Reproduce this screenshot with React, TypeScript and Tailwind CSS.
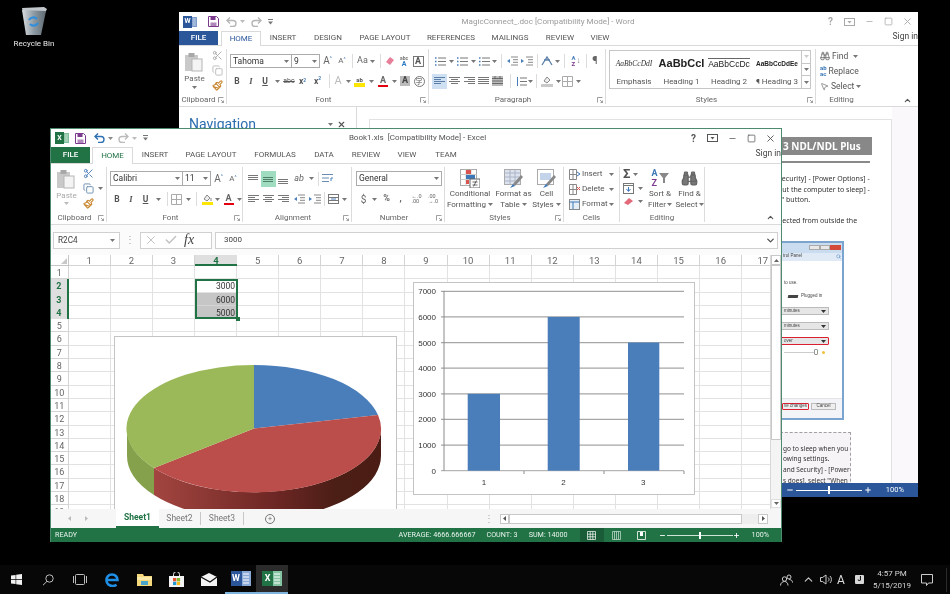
import { Binoculars, Copy, Paintbrush, Scissors, ChevronDown, ChevronUp, Search, MousePointer2, Check, X, Minus, Plus, Square } from 'lucide-react'
import type { ReactNode } from 'react'

const COLUMNS = Array.from({ length: 17 }, (_, i) => i + 1)
const ROWS = Array.from({ length: 19 }, (_, i) => i + 1)
const SELECTED: Record<number, string> = { 2: '3000', 3: '6000', 4: '5000' }

function C({ className = '', children }: { className?: string; children?: ReactNode }) {
  return <span className={`flex shrink-0 items-center justify-center ${className}`}>{children}</span>
}

function Caret({ color = '#777' }: { color?: string }) {
  return (
    <svg width="5" height="3" viewBox="0 0 5 3">
      <path d="M0 0h5L2.5 3z" fill={color} />
    </svg>
  )
}

function Launcher() {
  return (
    <svg width="6" height="6" viewBox="0 0 6 6" className="mr-[2px] shrink-0">
      <path d="M.5 5.5V.5h5M3 3l2.5 2.5M5.5 3.5v2h-2" fill="none" stroke="#888" strokeWidth=".8" />
    </svg>
  )
}

function Lines({ rows, color = '#777', w = 11, h = 10 }: { rows: number[][]; color?: string; w?: number; h?: number }) {
  return (
    <svg width={w} height={h} viewBox={`0 0 ${w} ${h}`}>
      {rows.map((r, i) => (
        <path key={i} d={`M${r[0]} ${r[2]}H${r[1]}`} stroke={color} strokeWidth="1" />
      ))}
    </svg>
  )
}

const ALIGN_LEFT = [[0, 11, 1.5], [0, 7, 3.5], [0, 11, 5.5], [0, 7, 7.5]]
const ALIGN_CENTER = [[0, 11, 1.5], [2, 9, 3.5], [0, 11, 5.5], [2, 9, 7.5]]
const ALIGN_RIGHT = [[0, 11, 1.5], [4, 11, 3.5], [0, 11, 5.5], [4, 11, 7.5]]
const ALIGN_FULL = [[0, 11, 1.5], [0, 11, 3.5], [0, 11, 5.5], [0, 11, 7.5]]

function ListIcon() {
  return (
    <svg width="12" height="11" viewBox="0 0 12 11">
      <path d="M1 2h1.5M1 5.5h1.5M1 9h1.5" stroke="#4a7ebb" strokeWidth="1.4" />
      <path d="M4 2h8M4 5.5h8M4 9h8" stroke="#777" />
    </svg>
  )
}

function IndentIcon({ flip = false, color = '#4a7ebb' }: { flip?: boolean; color?: string }) {
  return (
    <svg width="12" height="10" viewBox="0 0 12 10">
      <path d="M5 1h7M7 3.7h5M7 6.3h5M5 9h7" stroke="#888" />
      <path d={flip ? 'M0 3l3 2-3 2z' : 'M4 3L1 5l3 2z'} fill={color} />
    </svg>
  )
}

function PasteIcon() {
  return (
    <svg width="21" height="20" viewBox="0 0 21 20">
      <rect x="1" y="3" width="13" height="16" fill="#c9c9c9" />
      <rect x="4.5" y="1" width="6" height="4" fill="#a8a8a8" />
      <rect x="8" y="7" width="10" height="12" fill="#f4f4f4" stroke="#b5b5b5" />
    </svg>
  )
}

function OfficeIcon({ letter, dark, light, big = false }: { letter: string; dark: string; light: string; big?: boolean }) {
  return (
    <span className={big ? 'flex h-[15px] w-[20px] items-center' : 'flex h-[12px] w-[14px] items-center'}>
      <span
        className={`z-10 flex items-center justify-center font-bold text-white ${
          big ? 'h-[15px] w-[11px] text-[9px]' : 'h-[12px] w-[9px] text-[7px]'
        }`}
        style={{ backgroundColor: dark }}
      >
        {letter}
      </span>
      <svg width={big ? 9 : 5} height={big ? 15 : 10} viewBox="0 0 9 15" preserveAspectRatio="none">
        <rect width="9" height="15" fill={light} />
        <path d="M1 3h6M1 6h6M1 9h6M1 12h6" stroke="#fff" strokeWidth="1" />
      </svg>
    </span>
  )
}

function SaveIcon({ color }: { color: string }) {
  return (
    <svg width="11" height="11" viewBox="0 0 11 11">
      <path d="M.5.5h8l2 2v8H.5z" fill="#fff" stroke={color} />
      <rect x="2.5" y="1" width="5" height="3" fill={color} />
      <rect x="2.5" y="6.5" width="6" height="4" fill={color} opacity=".6" />
    </svg>
  )
}

function UndoIcon({ color }: { color: string }) {
  return (
    <svg width="11" height="10" viewBox="0 0 11 10">
      <path d="M1.5 3.5h5.5a3 3 0 010 6H4" fill="none" stroke={color} strokeWidth="1.4" />
      <path d="M4 .5L1 3.5l3 3" fill="none" stroke={color} strokeWidth="1.4" />
    </svg>
  )
}

function RedoIcon({ color }: { color: string }) {
  return (
    <svg width="11" height="10" viewBox="0 0 11 10">
      <path d="M9.5 3.5H4a3 3 0 000 6h3" fill="none" stroke={color} strokeWidth="1.4" />
      <path d="M7 .5l3 3-3 3" fill="none" stroke={color} strokeWidth="1.4" />
    </svg>
  )
}

function Customize() {
  return (
    <svg width="5" height="6" viewBox="0 0 5 6">
      <path d="M0 .5h5" stroke="#777" />
      <path d="M0 2.5h5L2.5 5.5z" fill="#777" />
    </svg>
  )
}

function WindowControls({ dim = false }: { dim?: boolean }) {
  const color = dim ? '#a8a8a8' : '#555'
  return (
    <div className="flex items-center">
      <C className="w-[19px]">
        <span className={`text-[10px] font-bold ${dim ? 'text-[#a8a8a8]' : 'text-[#555]'}`}>?</span>
      </C>
      <C className="w-[19px]">
        <svg width="11" height="8" viewBox="0 0 11 8">
          <rect x=".5" y=".5" width="10" height="7" fill="none" stroke={color} />
          <path d="M3.5 3h4L5.5 5.5z" fill={color} />
        </svg>
      </C>
      <C className="w-[20px]">
        <Minus size={9} color={color} />
      </C>
      <C className="w-[19px]">
        <Square size={9} color={color} />
      </C>
      <C className="w-[19px]">
        <X size={11} color={color} />
      </C>
    </div>
  )
}

function Group({ className = '', label, launcher = false, children }: { className?: string; label: string; launcher?: boolean; children: ReactNode }) {
  return (
    <div className={`flex h-[55px] shrink-0 flex-col border-r border-[#dcdcdc] ${className}`}>
      <div className="h-[47px]">{children}</div>
      <div className="flex h-[8px] items-center text-[8px] text-[#666]">
        <span className="flex-1 text-center">{label}</span>
        {launcher && <Launcher />}
      </div>
    </div>
  )
}

function FontBox({ className = '', text }: { className?: string; text: string }) {
  return (
    <span className={`flex h-full items-center justify-between border border-[#ababab] bg-white px-[2px] text-[8.5px] text-[#333] ${className}`}>
      {text}
      <Caret />
    </span>
  )
}

function GrowFont({ small = false }: { small?: boolean }) {
  return (
    <span className="flex items-start text-[#666]">
      <span className={small ? 'text-[8px] leading-none' : 'text-[10px] leading-none'}>A</span>
      <span className="text-[5px] leading-none text-[#4a7ebb]">^</span>
    </span>
  )
}

function ColorA({ color }: { color: string }) {
  return (
    <span className="flex flex-col items-center leading-none">
      <span className="text-[9px] font-bold leading-[9px] text-[#666]">A</span>
      <span className="h-[2px] w-[10px]" style={{ backgroundColor: color }} />
    </span>
  )
}

function FillIcon() {
  return (
    <span className="flex flex-col items-center">
      <svg width="10" height="8" viewBox="0 0 10 8">
        <path d="M2 5l3-4 3 3-3 3z" fill="#eee" stroke="#888" />
        <path d="M9 4v3" stroke="#888" />
      </svg>
      <span className="h-[3px] w-[11px] bg-[#ffe600]" />
    </span>
  )
}

function BorderIcon() {
  return (
    <svg width="11" height="11" viewBox="0 0 11 11">
      <path d="M.5.5h10v10H.5zM5.5.5v10M.5 5.5h10" fill="none" stroke="#aaa" />
    </svg>
  )
}

function PainterIcon() {
  return <Paintbrush size={11} color="#c8852c" strokeWidth={2.4} />
}

function WordWindow() {
  return (
    <div className="absolute left-[179px] top-[12px] flex h-[485px] w-[739px] flex-col bg-white">
      {/* title bar */}
      <div className="flex h-[19px] shrink-0 items-center">
        <div className="flex w-[96px] items-center pl-[4px]">
          <C className="w-[14px]"><OfficeIcon letter="W" dark="#2b579a" light="#7c9ccb" /></C>
          <C className="ml-[10px] w-[13px]"><SaveIcon color="#7c3a8e" /></C>
          <C className="ml-[5px] w-[13px]"><UndoIcon color="#b5b5b5" /></C>
          <C className="w-[8px]"><Caret color="#bbb" /></C>
          <C className="ml-[4px] w-[13px]"><RedoIcon color="#b5b5b5" /></C>
          <C className="ml-[3px] w-[8px]"><Customize /></C>
        </div>
        <div className="flex-1 truncate text-center text-[8.1px] text-[#9a9a9a]">MagicConnect_.doc [Compatibility Mode] - Word</div>
        <div className="pr-[1px]"><WindowControls dim /></div>
      </div>

      {/* tabs */}
      <div className="flex h-[15px] shrink-0 items-stretch border-b border-[#dadada] text-[8px] text-[#555]">
        <span className="flex w-[39px] items-center justify-center bg-[#2b579a] font-medium text-white">FILE</span>
        <span className="-mb-px ml-[3px] flex w-[40px] items-center justify-center border-x border-t border-[#dadada] bg-white text-[#2b579a]">HOME</span>
        <C className="w-[44px]">INSERT</C>
        <C className="w-[46px]">DESIGN</C>
        <C className="w-[68px]">PAGE LAYOUT</C>
        <C className="w-[64px]">REFERENCES</C>
        <C className="w-[54px]">MAILINGS</C>
        <C className="w-[46px]">REVIEW</C>
        <C className="w-[34px]">VIEW</C>
        <span className="ml-auto flex items-center pb-[4px] text-[8.5px] text-[#444]">Sign in</span>
      </div>

      {/* ribbon */}
      <div className="flex h-[61px] shrink-0 border-b border-[#dadada] pt-[3px]">
        <Group className="w-[48px]" label="Clipboard" launcher>
          <div className="flex">
            <div className="flex w-[31px] flex-col items-center pt-[3px] text-[8px] text-[#666]">
              <PasteIcon />
              <span className="mt-[2px] leading-[9px]">Paste</span>
              <span className="mt-[3px]"><Caret /></span>
            </div>
            <div className="flex w-[14px] flex-col items-center gap-[4px] pt-[1px]">
              <Scissors size={11} color="#aaa" />
              <Copy size={11} color="#bbb" />
              <PainterIcon />
            </div>
          </div>
        </Group>

        <Group className="w-[202px]" label="Font" launcher>
          <div className="mt-[5px] flex h-[14px] items-center pl-[3px]">
            <FontBox className="w-[62px]" text="Tahoma" />
            <FontBox className="w-[28px] border-l-0" text="9" />
            <C className="w-[15px]"><GrowFont /></C>
            <C className="w-[14px]"><GrowFont small /></C>
            <C className="w-[6px]"><span className="h-[14px] w-px bg-[#dcdcdc]" /></C>
            <C className="w-[22px] gap-[2px] text-[9px] text-[#666]">Aa<Caret /></C>
            <C className="w-[6px]"><span className="h-[14px] w-px bg-[#dcdcdc]" /></C>
            <C className="w-[14px]">
              <svg width="10" height="10" viewBox="0 0 10 10"><path d="M1 6l4-5 4 3-4 5z" fill="#e77f9a" /></svg>
            </C>
            <C className="w-[14px] flex-col text-[5px] font-bold leading-[5px] text-[#777]">abc<span className="text-[7px] leading-[6px] text-[#2b79c2]">A</span></C>
            <C className="w-[14px]"><span className="flex h-[11px] w-[11px] items-center justify-center border border-[#777] text-[9px] font-bold leading-none text-[#555]">A</span></C>
          </div>
          <div className="mt-[6px] flex h-[14px] items-center pl-[3px] text-[8.5px] text-[#555]">
            <C className="w-[14px] font-bold">B</C>
            <C className="w-[14px] font-['Liberation_Serif'] font-bold italic">I</C>
            <C className="w-[14px] font-bold underline">U</C>
            <C className="w-[11px]"><Caret /></C>
            <C className="w-[12px] text-[7px] line-through">abc</C>
            <C className="w-[15px] font-bold">x<span className="text-[5px] text-[#4a7ebb]">2</span></C>
            <C className="w-[15px] font-bold">x<span className="-mt-[4px] text-[5px] text-[#4a7ebb]">2</span></C>
            <C className="w-[8px]"><span className="h-[14px] w-px bg-[#dcdcdc]" /></C>
            <C className="w-[10px] text-[11px] text-[#bbb]">A</C>
            <C className="w-[10px]"><Caret /></C>
            <C className="w-[13px]">
              <span className="flex flex-col items-center text-[6px] font-bold leading-[7px] text-[#555]">ab<span className="h-[4px] w-[11px] bg-[#ffe600]" /></span>
            </C>
            <C className="w-[10px]"><Caret /></C>
            <C className="w-[14px]"><ColorA color="#e3000f" /></C>
            <C className="w-[8px]"><Caret /></C>
            <C className="w-[14px]"><span className="flex h-[10px] w-[10px] items-center justify-center bg-[#bbb] text-[9px] font-bold text-[#444]">A</span></C>
            <C className="w-[14px]"><span className="flex h-[11px] w-[11px] items-center justify-center rounded-full border border-[#777] font-['Noto_Sans_CJK_JP'] text-[7px]">字</span></C>
          </div>
        </Group>

        <Group className="w-[177px]" label="Paragraph" launcher>
          <div className="mt-[5px] flex h-[14px] items-center pl-[3px]">
            <C className="w-[16px]"><ListIcon /></C>
            <C className="w-[6px]"><Caret /></C>
            <C className="w-[16px]"><ListIcon /></C>
            <C className="w-[6px]"><Caret /></C>
            <C className="w-[16px]"><ListIcon /></C>
            <C className="w-[5px]"><Caret /></C>
            <C className="w-[8px]"><span className="h-[14px] w-px bg-[#dcdcdc]" /></C>
            <C className="w-[14px]"><IndentIcon /></C>
            <C className="w-[15px]"><IndentIcon flip /></C>
            <C className="w-[6px]"><span className="h-[14px] w-px bg-[#dcdcdc]" /></C>
            <C className="w-[14px]">
              <svg width="12" height="10" viewBox="0 0 12 10"><path d="M1 9l5-8 5 8M3 4h6" fill="none" stroke="#5a7fa8" strokeWidth="1.3" /></svg>
            </C>
            <C className="w-[6px]"><Caret /></C>
            <C className="w-[8px]"><span className="h-[14px] w-px bg-[#dcdcdc]" /></C>
            <C className="w-[16px] gap-[1px] text-[6px] font-bold leading-[6px]">
              <span className="flex flex-col text-[#4a7ebb]">A<span className="text-[#7c3a8e]">Z</span></span>
              <span className="text-[8px] text-[#777]">↓</span>
            </C>
            <C className="w-[4px]"><span className="h-[14px] w-px bg-[#dcdcdc]" /></C>
            <C className="w-[14px] text-[11px] text-[#666]">¶</C>
          </div>
          <div className="mt-[6px] flex h-[14px] items-center pl-[3px]">
            <C className="h-[15px] w-[15px] bg-[#cfe0f3]"><Lines rows={ALIGN_LEFT} color="#5a7fa8" /></C>
            <C className="w-[15px]"><Lines rows={ALIGN_CENTER} /></C>
            <C className="w-[14px]"><Lines rows={ALIGN_RIGHT} /></C>
            <C className="w-[14px]"><Lines rows={ALIGN_FULL} /></C>
            <C className="w-[15px]">
              <svg width="11" height="10" viewBox="0 0 11 10"><rect width="11" height="10" fill="#bbb" /><path d="M0 2.5h11M0 5h11M0 7.5h11M3 0v3M8 0v3" stroke="#555" strokeWidth=".8" /></svg>
            </C>
            <C className="w-[10px]"><span className="h-[14px] w-px bg-[#dcdcdc]" /></C>
            <C className="w-[12px]">
              <svg width="11" height="11" viewBox="0 0 11 11"><path d="M4 2h7M4 5.5h7M4 9h7" stroke="#777" /><path d="M1.5 1v9" stroke="#4a7ebb" /></svg>
            </C>
            <C className="w-[6px]"><Caret /></C>
            <C className="w-[6px]"><span className="h-[14px] w-px bg-[#dcdcdc]" /></C>
            <C className="w-[16px]">
              <svg width="12" height="12" viewBox="0 0 12 12"><path d="M3 6l3-4 3 3-3 3z" fill="#eee" stroke="#888" /><rect y="9" width="12" height="3" fill="#c9c9c9" /></svg>
            </C>
            <C className="w-[6px]"><Caret /></C>
            <C className="w-[12px]"><BorderIcon /></C>
            <C className="w-[10px]"><Caret /></C>
          </div>
        </Group>

        <Group className="w-[210px]" label="Styles" launcher>
          <div className="ml-[3px] mt-[1px] flex h-[39px] w-[202px] border border-[#c6c6c6] text-[8px] text-[#555]">
            <div className="flex w-[48px] flex-col items-center">
              <span className="flex h-[26px] items-center font-['Liberation_Serif'] text-[7.5px] italic text-[#333]">AaBbCcDdI</span>
              <span>Emphasis</span>
            </div>
            <div className="flex w-[47px] flex-col items-center">
              <span className="flex h-[26px] items-center font-['Liberation_Sans'] text-[11px] font-bold text-[#222]">AaBbCcI</span>
              <span>Heading 1</span>
            </div>
            <div className="flex w-[48px] flex-col items-center">
              <span className="flex h-[26px] items-center">
                <span className="border-t border-[#666] font-['Liberation_Sans'] text-[8.5px] leading-[11px] text-[#222]">AaBbCcDc</span>
              </span>
              <span>Heading 2</span>
            </div>
            <div className="flex w-[48px] flex-col items-center">
              <span className="flex h-[26px] items-center font-['Liberation_Sans'] text-[6.5px] font-bold text-[#222]">AaBbCcDdEe</span>
              <span>¶ Heading 3</span>
            </div>
            <div className="flex w-[9px] flex-col border-l border-[#c6c6c6]">
              <C className="flex-1 border-b border-[#c6c6c6]"><Caret color="#ccc" /></C>
              <C className="flex-1 border-b border-[#c6c6c6]"><Caret /></C>
              <C className="flex-1"><Caret /></C>
            </div>
          </div>
        </Group>

        <Group className="w-[51px] border-r-0" label="Editing">
          <div className="flex flex-col gap-[3px] pl-[4px] pt-[1px] text-[8.5px] leading-[12px] text-[#555]">
            <span className="flex items-center gap-[2px]"><Binoculars size={10} color="#666" />Find<span className="ml-[3px]"><Caret /></span></span>
            <span className="flex items-center gap-[2px]">
              <span className="text-[6px] font-bold leading-[6px] text-[#3c78b8]">ab<br />ac</span>Replace
            </span>
            <span className="flex items-center gap-[2px]"><MousePointer2 size={9} color="#777" />Select<Caret /></span>
          </div>
        </Group>

        <div className="flex flex-1 items-end justify-end pb-[1px] pr-[6px]">
          <ChevronUp size={9} color="#555" strokeWidth={3} />
        </div>
      </div>

      {/* document */}
      <div className="flex min-h-0 flex-1">
        <div className="h-full w-[178px] shrink-0 border-r border-[#dadada] px-[10px] pt-[8px]">
          <div className="flex items-center justify-between text-[14px] leading-[18px] text-[#2b6cb0]">
            <span>Navigation</span>
            <span className="flex items-center gap-[4px]"><Caret /><X size={9} color="#555" strokeWidth={3} /></span>
          </div>
        </div>
        <div className="h-full w-[535px] bg-white pl-[12px] pt-[12px]">
          <div className="h-full border border-b-0 border-[#e2e2e2] pl-[410px] pt-[17px]">
            <div className="flex h-[18px] w-[92px] items-center bg-[#888] pl-[3px] font-['Noto_Sans'] text-[10px] font-bold text-white">3 NDL/NDL Plus</div>
            <div className="mt-[6px] h-[2px] w-[90px] bg-[#8a8a8a]" />
            <div className="ml-[-2px] mt-[11px] flex flex-col whitespace-nowrap font-['Noto_Sans'] text-[7px] leading-[10.5px] text-[#333]">
              <span>Security] - [Power Options] -</span>
              <span>Put the computer to sleep] -</span>
              <span>s" button.</span>
              <span className="mt-[10.5px]">nected from outside the</span>
            </div>
            {/* pasted dialog picture */}
            <div className="mt-[14px] flex h-[179px] w-[64px] flex-col border-2 border-[#7ba4cf] bg-white font-['Liberation_Sans'] text-[4.5px] text-[#444]">
              <div className="flex h-[10px] items-center justify-end bg-[#c9dcf0] pr-[1px]">
                <span className="h-[5px] w-[11px] border border-[#aaa] bg-[#e8e8e8]" />
                <span className="h-[5px] w-[10px] border border-[#aaa] bg-[#e8e8e8]" />
                <span className="h-[5px] w-[11px] bg-[#d24a3a]" />
              </div>
              <div className="flex h-[8px] items-center justify-between bg-[#dfeaf6] px-[1px]">
                <span>trol Panel</span>
                <Search size={5} color="#3c78b8" />
              </div>
              <div className="mt-[19px] pl-[2px]">to use.</div>
              <div className="mt-[7px] flex items-center gap-[3px] pl-[6px]">
                <span className="h-[3px] w-[10px] -skew-x-12 bg-[#444]" />Plugged in
              </div>
              <div className="ml-[-1px] mt-[7px] flex h-[8px] w-[48px] items-center justify-between border border-[#bbb] bg-[#e6e6e6] px-[2px]">minutes<Caret color="#333" /></div>
              <div className="ml-[-1px] mt-[7px] flex h-[8px] w-[48px] items-center justify-between border border-[#bbb] bg-[#e6e6e6] px-[2px]">minutes<Caret color="#333" /></div>
              <div className="ml-[-1px] mt-[7px] flex h-[8px] w-[48px] items-center justify-between rounded-[1px] border border-[#d92030] bg-[#e6e6e6] px-[2px]">over<Caret color="#333" /></div>
              <div className="mt-[4px] flex items-center pl-[2px]">
                <span className="h-px w-[30px] bg-[#ccc]" />
                <span className="h-[6px] w-[4px] rounded-[1px] border border-[#999] bg-white" />
                <span className="ml-[4px] h-[3px] w-[3px] rounded-full bg-[#f0c040]" />
              </div>
              <div className="mt-auto flex h-[20px] items-center gap-[2px] border-t border-[#e4e4e4] bg-[#f2f4f7] pb-[4px]">
                <span className="flex h-[7px] w-[27px] items-center rounded-[1px] border border-[#d92030] bg-[#eee] pl-[1px]">ve changes</span>
                <span className="flex h-[7px] w-[25px] items-center justify-center border border-[#bbb] bg-[#eee]">Cancel</span>
              </div>
            </div>
            {/* dashed note */}
            <div className="mt-[12px] h-[60px] w-[71px] overflow-hidden border border-dashed border-[#a0a0a0] bg-[#f7f4f7] pl-[2px] pt-[11px] font-['Noto_Sans'] text-[6.5px] leading-[10.7px] text-[#333]">
              <div className="whitespace-nowrap">go to sleep when you</div>
              <div className="whitespace-nowrap">owing settings.</div>
              <div className="whitespace-nowrap">and Security] - [Power</div>
              <div className="whitespace-nowrap">s does], select "When</div>
            </div>
          </div>
        </div>
        <div className="h-full flex-1 bg-[#fbf8fb]" />
      </div>

      {/* status bar */}
      <div className="flex h-[14px] shrink-0 items-center justify-end bg-[#2b579a] pr-[14px] text-[7.5px] text-white">
        <Minus size={8} color="#fff" strokeWidth={3} />
        <span className="mx-[2px] flex h-px w-[66px] items-center justify-center bg-white">
          <span className="h-[8px] w-[2px] bg-white" />
        </span>
        <Plus size={8} color="#fff" strokeWidth={3} />
        <span className="ml-[14px]">100%</span>
      </div>
    </div>
  )
}

function BarChart() {
  const bars = [
    { x: 54.7, w: 32.3, v: 3000 },
    { x: 134.7, w: 32, v: 6000 },
    { x: 215, w: 31.3, v: 5000 },
  ]
  const y = (v: number) => 188.7 - (v / 7000) * 179.4
  return (
    <svg width="282" height="213" viewBox="1 1 280 211" className="absolute left-[362px] top-[27px] border border-[#c4c4c4] bg-white">
      {[0, 1000, 2000, 3000, 4000, 5000, 6000, 7000].map((v) => (
        <g key={v}>
          <path d={`M28 ${y(v)}H271`} stroke="#a6a6a6" strokeWidth={v === 0 ? 1 : 1.2} />
          <text x="23" y={y(v) + 3} textAnchor="end" fontSize="8" fill="#333" fontFamily="Liberation Sans">{v}</text>
        </g>
      ))}
      <path d="M31 9v180M111 189v3M191 189v3M271 189v3" stroke="#8a8a8a" fill="none" />
      {bars.map((b) => (
        <rect key={b.x} x={b.x} y={y(b.v)} width={b.w} height={188.7 - y(b.v)} fill="#4a7ebb" />
      ))}
      {[1, 2, 3].map((n, i) => (
        <text key={n} x={71 + i * 79.6} y="203" textAnchor="middle" fontSize="8" fill="#333" fontFamily="Liberation Sans">{n}</text>
      ))}
    </svg>
  )
}

function PieChart() {
  return (
    <svg width="283" height="202" viewBox="1 1 281 200" className="absolute left-[63px] top-[81px] border border-[#c4c4c4] bg-white">
      <defs>
        <linearGradient id="redSide" x1="0" x2="1" y1="0" y2="0">
          <stop offset="0" stopColor="#a34540" />
          <stop offset=".55" stopColor="#6b2623" />
          <stop offset=".8" stopColor="#4b1e16" />
          <stop offset="1" stopColor="#4a1c14" />
        </linearGradient>
      </defs>
      <path d="M13 92.5A127 63.5 0 0 0 40 132V159A127 63.5 0 0 1 13 119.5Z" fill="#86a14c" />
      <path d="M40 132A127 63.5 0 0 0 267 92.5V119.5A127 63.5 0 0 1 40 159Z" fill="url(#redSide)" />
      <path d="M140 92.5V29A127 63.5 0 0 1 264 79Z" fill="#4a7ebb" />
      <path d="M140 92.5L264 79A127 63.5 0 0 1 40 132Z" fill="#bb4d4a" />
      <path d="M140 92.5L40 132A127 63.5 0 0 1 140 29Z" fill="#9bb958" />
    </svg>
  )
}

function Sheet() {
  return (
    <div className="relative min-w-0 flex-1 overflow-hidden bg-white">
      <div className="flex h-[11px] text-[9.5px] leading-[11px] text-[#666]">
        <div className="flex w-[17.7px] shrink-0 items-end justify-end border-b border-r border-[#c6c6c6] pb-[1px] pr-[1px]">
          <svg width="6" height="6" viewBox="0 0 6 6"><path d="M6 0v6H0z" fill="#c8c8c8" /></svg>
        </div>
        {COLUMNS.map((col) => (
          <div
            key={col}
            className={
              col === 4
                ? 'w-[42.1px] shrink-0 border-b-2 border-[#217346] bg-[#dfdfdf] text-center font-bold text-[#217346]'
                : 'w-[42.1px] shrink-0 border-b border-r border-[#d4d4d4] text-center'
            }
          >
            {col}
          </div>
        ))}
      </div>
      {ROWS.map((row) => (
        <div key={row} className="flex h-[13.3px] text-[9px] leading-[14px] text-[#666]">
          <div
            className={
              SELECTED[row]
                ? 'w-[17.7px] shrink-0 border-r-2 border-[#217346] bg-[#dfdfdf] text-center font-bold text-[#217346]'
                : 'w-[17.7px] shrink-0 border-b border-r border-[#d4d4d4] text-center'
            }
          >
            {row}
          </div>
          {COLUMNS.map((col) => (
            <div
              key={col}
              className={
                col === 4 && row > 2 && row < 5
                  ? 'w-[42.1px] shrink-0 border-b border-r border-[#d4d4d4] bg-[#c6c6c6] pr-[1px] text-right text-[8.5px] text-[#333]'
                  : 'w-[42.1px] shrink-0 border-b border-r border-[#e2e2e2] pr-[1px] text-right text-[8.5px] text-[#333]'
              }
            >
              {col === 4 ? SELECTED[row] : ''}
            </div>
          ))}
        </div>
      ))}
      {/* selection frame */}
      <div className="absolute left-[144px] top-[24px] h-[40px] w-[43px] border-2 border-[#217346]" />
      <div className="absolute left-[185px] top-[62px] h-[4px] w-[4px] bg-[#217346]" />
      <PieChart />
      <BarChart />
    </div>
  )
}

function ExcelWindow() {
  return (
    <div className="absolute left-[50px] top-[128px] flex h-[414px] w-[732px] flex-col border-x border-t border-[#4d8b6e] bg-white">
      {/* title bar */}
      <div className="flex h-[18px] shrink-0 items-center">
        <div className="flex w-[100px] items-center pl-[4px]">
          <C className="w-[14px]"><OfficeIcon letter="X" dark="#217346" light="#7fbf9c" /></C>
          <C className="ml-[5px] w-[13px]"><SaveIcon color="#7c3a8e" /></C>
          <C className="ml-[6px] w-[13px]"><UndoIcon color="#2c6fb3" /></C>
          <C className="w-[8px]"><Caret color="#888" /></C>
          <C className="ml-[3px] w-[13px]"><RedoIcon color="#bbb" /></C>
          <C className="w-[8px]"><Caret color="#bbb" /></C>
          <C className="ml-[3px] w-[8px]"><Customize /></C>
        </div>
        <div className="flex-1 truncate text-center text-[8px] text-[#555]">Book1.xls&nbsp; [Compatibility Mode] - Excel</div>
        <div className="pr-[1px]"><WindowControls /></div>
      </div>

      {/* tabs */}
      <div className="flex h-[17px] shrink-0 items-stretch border-b border-[#dadada] text-[8px] text-[#555]">
        <span className="flex w-[39px] items-center justify-center bg-[#217346] font-medium text-white">FILE</span>
        <span className="-mb-px ml-[2px] flex w-[41px] items-center justify-center border-x border-t border-[#dadada] bg-white text-[#217346]">HOME</span>
        <C className="w-[44px]">INSERT</C>
        <C className="w-[68px]">PAGE LAYOUT</C>
        <C className="w-[60px]">FORMULAS</C>
        <C className="w-[38px]">DATA</C>
        <C className="w-[46px]">REVIEW</C>
        <C className="w-[36px]">VIEW</C>
        <C className="w-[42px]">TEAM</C>
        <span className="ml-auto flex items-center pb-[4px] text-[8.5px] text-[#444]">Sign in</span>
      </div>

      {/* ribbon */}
      <div className="flex h-[61px] shrink-0 border-b border-[#dadada] pt-[3px]">
        <Group className="w-[56px]" label="Clipboard" launcher>
          <div className="flex">
            <div className="flex w-[31px] flex-col items-center pt-[2px] text-[8px] text-[#aaa]">
              <PasteIcon />
              <span className="mt-[2px] leading-[9px]">Paste</span>
              <span className="mt-[2px]"><Caret color="#bbb" /></span>
            </div>
            <div className="flex w-[22px] flex-col items-start gap-[4px] pl-[1px] pt-[1px]">
              <Scissors size={11} color="#4a7ebb" />
              <span className="flex items-center gap-[4px]"><Copy size={11} color="#6a8cb0" /><Caret /></span>
              <PainterIcon />
            </div>
          </div>
        </Group>

        <Group className="w-[136px]" label="Font" launcher>
          <div className="mt-[4px] flex h-[15px] items-center pl-[3px]">
            <FontBox className="w-[73px]" text="Calibri" />
            <FontBox className="w-[28px] border-l-0" text="11" />
            <C className="w-[15px]"><GrowFont /></C>
            <C className="w-[14px]"><GrowFont small /></C>
          </div>
          <div className="mt-[6px] flex h-[14px] items-center pl-[3px] text-[8.5px] text-[#555]">
            <C className="w-[14px] font-bold">B</C>
            <C className="w-[14px] font-['Liberation_Serif'] font-bold italic">I</C>
            <C className="w-[15px] font-bold underline">U</C>
            <C className="w-[11px]"><Caret /></C>
            <C className="w-[6px]"><span className="h-[14px] w-px bg-[#dcdcdc]" /></C>
            <C className="w-[13px]"><BorderIcon /></C>
            <C className="w-[10px]"><Caret /></C>
            <C className="w-[7px]"><span className="h-[14px] w-px bg-[#dcdcdc]" /></C>
            <C className="w-[14px]"><FillIcon /></C>
            <C className="w-[7px]"><Caret /></C>
            <C className="w-[15px]"><ColorA color="#e3000f" /></C>
            <C className="w-[7px]"><Caret /></C>
          </div>
        </Group>

        <Group className="w-[109px]" label="Alignment" launcher>
          <div className="mt-[4px] flex h-[15px] items-center pl-[3px]">
            <C className="w-[15px]"><Lines rows={[[0, 10, 1.5], [0, 10, 3.5], [0, 10, 5.5]]} /></C>
            <C className="h-[16px] w-[15px] bg-[#a0dcc0]"><Lines rows={[[0, 10, 3.5], [0, 10, 5.5], [0, 10, 7.5]]} color="#4f7f68" /></C>
            <C className="w-[15px]"><Lines rows={[[0, 10, 5.5], [0, 10, 7.5], [0, 10, 9.5]]} /></C>
            <C className="w-[16px] text-[9px] italic text-[#666]">ab</C>
            <C className="w-[8px]"><Caret /></C>
            <C className="w-[6px]"><span className="h-[14px] w-px bg-[#dcdcdc]" /></C>
            <C className="w-[14px]">
              <svg width="12" height="11" viewBox="0 0 12 11"><path d="M0 1.5h11M0 5h7M0 8.5h7" stroke="#6a8cb0" strokeWidth="1.2" /><path d="M9 8V5h2" fill="none" stroke="#4a7ebb" /></svg>
            </C>
          </div>
          <div className="mt-[6px] flex h-[14px] items-center pl-[3px]">
            <C className="w-[15px]"><Lines rows={ALIGN_LEFT} /></C>
            <C className="w-[15px]"><Lines rows={ALIGN_CENTER} /></C>
            <C className="w-[15px]"><Lines rows={ALIGN_RIGHT} /></C>
            <C className="w-[16px]"><IndentIcon /></C>
            <C className="w-[15px]"><IndentIcon flip /></C>
            <C className="w-[4px]"><span className="h-[14px] w-px bg-[#dcdcdc]" /></C>
            <C className="w-[14px]">
              <svg width="11" height="10" viewBox="0 0 11 10"><rect x=".5" y=".5" width="10" height="9" fill="none" stroke="#777" /><path d="M.5 3.5h10M.5 6.5h10" stroke="#777" /><path d="M3 5h5" stroke="#4a7ebb" /></svg>
            </C>
            <C className="w-[8px]"><Caret /></C>
          </div>
        </Group>

        <Group className="w-[93px]" label="Number" launcher>
          <div className="mt-[4px] flex h-[15px] items-center pl-[4px]">
            <FontBox className="w-[86px]" text="General" />
          </div>
          <div className="mt-[6px] flex h-[14px] items-center pl-[4px] text-[9px] text-[#666]">
            <C className="w-[15px] text-[10px]">$</C>
            <C className="w-[7px]"><Caret /></C>
            <C className="w-[17px] font-bold">%</C>
            <C className="w-[11px] font-bold">,</C>
            <C className="ml-[2px] w-[17px] text-[5.5px] leading-[5px]">←.0<br />.00</C>
            <C className="w-[16px] text-[5.5px] leading-[5px]">.00<br />→.0</C>
          </div>
        </Group>

        <Group className="w-[119px]" label="Styles" launcher>
          <div className="flex text-[8px] leading-[10.5px] text-[#555]">
            <div className="flex w-[50px] flex-col items-center pt-[2px] text-center">
              <svg width="20" height="19" viewBox="0 0 20 19">
                <rect x=".5" y=".5" width="16" height="16" fill="#fff" stroke="#aaa" />
                <path d="M6 .5v16M11 .5v16M.5 5.5h16M.5 10.5h16" stroke="#ccc" />
                <rect x="6" y="1" width="5" height="4" fill="#d9534f" />
                <rect x="6" y="6" width="9" height="4" fill="#3c78b8" />
                <rect x="6" y="11" width="3" height="4" fill="#d9534f" />
                <rect x="10" y="10" width="10" height="9" fill="#fff" stroke="#666" />
                <path d="M12.5 13h5M12.5 16h5M16.5 11.5l-3 6" stroke="#444" strokeWidth=".8" />
              </svg>
              <span className="mt-[1px] whitespace-nowrap">Conditional</span>
              <span className="flex items-center gap-[2px] whitespace-nowrap">Formatting<Caret /></span>
            </div>
            <div className="flex w-[37px] flex-col items-center pt-[2px] text-center">
              <svg width="20" height="19" viewBox="0 0 20 19">
                <rect x=".5" y=".5" width="16" height="15" fill="#dde3ee" stroke="#aaa" />
                <path d="M.5 4h16M.5 8h16M.5 12h16M6 .5v15M11 .5v15" stroke="#aab4c6" />
                <path d="M9 15l8-9 2 2-8 9z" fill="#888" />
                <path d="M6 19l3-4 2 2z" fill="#3c78b8" />
              </svg>
              <span className="mt-[1px] whitespace-nowrap">Format as</span>
              <span className="flex items-center gap-[2px]">Table<Caret /></span>
            </div>
            <div className="flex w-[29px] flex-col items-center pt-[2px] text-center">
              <svg width="20" height="19" viewBox="0 0 20 19">
                <rect x=".5" y=".5" width="16" height="15" fill="#fff" stroke="#aaa" />
                <rect x="3" y="4" width="11" height="7" fill="#c3d4ea" />
                <path d="M9 15l8-9 2 2-8 9z" fill="#888" />
                <path d="M6 19l3-4 2 2z" fill="#3c78b8" />
              </svg>
              <span className="mt-[1px]">Cell</span>
              <span className="flex items-center gap-[2px]">Styles<Caret /></span>
            </div>
          </div>
        </Group>

        <Group className="w-[56px]" label="Cells">
          <div className="flex flex-col gap-[3px] pl-[5px] pt-[1px] text-[8px] leading-[12px] text-[#555]">
            <span className="flex items-center gap-[1px]">
              <svg width="12" height="11" viewBox="0 0 12 11"><path d="M.5.5h7v10h-7zM.5 5.5h7M4 .5v10" fill="#fff" stroke="#888" /><path d="M8 3l3 2-3 2" fill="none" stroke="#3c78b8" /></svg>
              Insert<span className="ml-[5px]"><Caret /></span>
            </span>
            <span className="flex items-center gap-[1px]">
              <svg width="12" height="11" viewBox="0 0 12 11"><path d="M.5.5h7v10h-7zM.5 5.5h7M4 .5v10" fill="#fff" stroke="#888" /><path d="M8 3l3 3M11 3L8 6" stroke="#d9534f" /></svg>
              Delete<span className="ml-[3px]"><Caret /></span>
            </span>
            <span className="flex items-center gap-[1px]">
              <svg width="12" height="11" viewBox="0 0 12 11"><rect x=".5" y=".5" width="10" height="10" fill="#e4ecf6" stroke="#888" /><path d="M.5 3h10M4 3v7" stroke="#3c78b8" /></svg>
              Format<Caret />
            </span>
          </div>
        </Group>

        <Group className="w-[85px]" label="Editing">
          <div className="flex">
            <div className="flex w-[24px] flex-col gap-[3px] pl-[3px] pt-[1px] leading-[12px]">
              <span className="flex items-center gap-[3px] text-[13px] font-bold text-[#555]">Σ<Caret /></span>
              <span className="flex items-center gap-[4px]">
                <svg width="11" height="11" viewBox="0 0 11 11"><rect x=".5" y=".5" width="10" height="10" fill="#fff" stroke="#777" /><path d="M.5 2.5h10" stroke="#777" /><path d="M5.5 4v4M3.5 6l2 2.5 2-2.5" fill="none" stroke="#3c78b8" /></svg>
                <Caret />
              </span>
              <span className="flex items-center gap-[4px]">
                <svg width="11" height="9" viewBox="0 0 11 9"><path d="M1 6l5-5 4 3-5 4z" fill="#e26a7a" /></svg>
                <Caret />
              </span>
            </div>
            <div className="flex w-[32px] flex-col items-center pt-[1px] text-[8px] leading-[10.5px] text-[#555]">
              <span className="flex h-[20px] items-center gap-[1px]">
                <span className="flex flex-col text-[9px] font-bold leading-[10px]"><span className="text-[#3c78b8]">A</span><span className="text-[#7c3a8e]">Z</span></span>
                <svg width="10" height="10" viewBox="0 0 10 10"><path d="M0 0h10L6 5v5H4V5z" fill="#888" /></svg>
              </span>
              <span className="mt-[1px] whitespace-nowrap">Sort &amp;</span>
              <span className="flex items-center gap-[1px] whitespace-nowrap">Filter<Caret /></span>
            </div>
            <div className="flex w-[27px] flex-col items-center pt-[1px] text-[8px] leading-[10.5px] text-[#555]">
              <span className="flex h-[20px] items-center"><Binoculars size={17} color="#666" fill="#777" /></span>
              <span className="mt-[1px] whitespace-nowrap">Find &amp;</span>
              <span className="flex items-center gap-[1px] whitespace-nowrap">Select<Caret /></span>
            </div>
          </div>
        </Group>

        <div className="flex flex-1 items-end justify-end pb-[2px] pr-[6px]">
          <ChevronUp size={9} color="#555" strokeWidth={3} />
        </div>
      </div>

      {/* formula bar */}
      <div className="flex h-[30px] shrink-0 items-center bg-[#fbfbfb] pl-[2px] pr-[3px]">
        <div className="flex h-[17px] w-[67px] items-center justify-between border border-[#d0d0d0] bg-white px-[4px] text-[8.2px] text-[#444]">
          R2C4<Caret />
        </div>
        <C className="w-[20px] text-[10px] leading-none text-[#aaa]">⋮</C>
        <div className="flex h-[17px] w-[72px] items-center gap-[6px] border border-[#d0d0d0] bg-white pl-[3px]">
          <X size={14} color="#c0c0c0" strokeWidth={1.6} />
          <Check size={14} color="#c0c0c0" strokeWidth={2.4} />
          <span className="font-['Liberation_Serif'] text-[14px] italic leading-none text-[#444]">fx</span>
        </div>
        <div className="ml-[3px] flex h-[17px] flex-1 items-center justify-between border border-[#d0d0d0] bg-white pl-[8px] pr-[1px] text-[8px] text-[#444]">
          3000
          <ChevronDown size={11} color="#555" strokeWidth={3} />
        </div>
      </div>

      {/* sheet and vertical scrollbar */}
      <div className="flex min-h-0 flex-1">
        <Sheet />
        <div className="flex w-[11px] shrink-0 flex-col border-l border-[#d8d8d8] bg-[#f4f4f4]">
          <C className="h-[10px] border border-[#c8c8c8] bg-white"><svg width="5" height="3" viewBox="0 0 5 3"><path d="M0 3h5L2.5 0z" fill="#666" /></svg></C>
          <div className="h-[175px] border border-[#c8c8c8] bg-white" />
          <C className="mb-[1px] mt-auto h-[9px] border border-[#e0e0e0] bg-white"><Caret color="#666" /></C>
        </div>
      </div>

      {/* sheet tabs */}
      <div className="flex h-[19px] shrink-0 items-center bg-[#f6f6f6] text-[8.5px] text-[#777]">
        <span className="ml-[17px] flex w-[20px] justify-between">
          <svg width="3" height="5" viewBox="0 0 3 5"><path d="M3 0v5L0 2.500z" fill="#bbb" /></svg>
          <svg width="3" height="5" viewBox="0 0 3 5"><path d="M0 0v5l3-2.500z" fill="#bbb" /></svg>
        </span>
        <span className="ml-[28px] flex h-full w-[43px] items-center justify-center border-b-2 border-[#217346] bg-white font-bold text-[#217346]">Sheet1</span>
        <span className="flex h-[13px] w-[42px] items-center justify-center border-r border-[#c8c8c8]">Sheet2</span>
        <span className="flex h-[13px] w-[43px] items-center justify-center border-r border-[#c8c8c8]">Sheet3</span>
        <C className="ml-[21px] h-[10px] w-[10px] rounded-full border border-[#777] text-[8px] leading-none">+</C>
        <span className="ml-[209px] text-[10px] leading-none text-[#aaa]">⋮</span>
        <C className="ml-[6px] h-[10px] w-[9px] border border-[#c8c8c8] bg-white">
          <svg width="3" height="5" viewBox="0 0 3 5"><path d="M3 0v5L0 2.500z" fill="#555" /></svg>
        </C>
        <span className="h-[10px] w-[233px] border border-[#c8c8c8] bg-white" />
        <span className="h-[10px] w-[16px] bg-[#eeeeee]" />
        <C className="h-[10px] w-[10px] border border-[#c8c8c8] bg-white">
          <svg width="3" height="5" viewBox="0 0 3 5"><path d="M0 0v5l3-2.500z" fill="#555" /></svg>
        </C>
      </div>

      {/* status bar */}
      <div className="flex h-[14px] shrink-0 items-center bg-[#217346] text-[7.2px] text-[#e8f3ed]">
        <span className="ml-[4px]">READY</span>
        <span className="ml-auto">AVERAGE: 4666.666667</span>
        <span className="ml-[11px]">COUNT: 3</span>
        <span className="ml-[11px]">SUM: 14000</span>
        <C className="ml-[12px] h-full w-[24px] bg-[#1a5c38]">
          <svg width="9" height="9" viewBox="0 0 9 9"><path d="M.5.5h8v8h-8zM3.2.5v8M5.8.5v8M.5 3.2h8M.5 5.8h8" fill="none" stroke="#fff" strokeWidth=".7" /></svg>
        </C>
        <C className="w-[26px]">
          <svg width="9" height="9" viewBox="0 0 9 9"><path d="M.5.5h8v8h-8zM2.500.5v8M6.500.5v8M4.500.5v8" fill="none" stroke="#cfe3d8" strokeWidth=".7" /></svg>
        </C>
        <C className="w-[24px]">
          <svg width="9" height="9" viewBox="0 0 9 9"><path d="M.5.5h8v8h-8z" fill="none" stroke="#fff" strokeWidth=".8" /><rect x="3" y="1" width="3" height="4" fill="#fff" /></svg>
        </C>
        <C className="ml-[5px] w-[8px]"><Minus size={7} color="#fff" strokeWidth={3} /></C>
        <span className="flex h-px w-[66px] items-center justify-center bg-[#cfe3d8]"><span className="h-[7px] w-[2px] bg-white" /></span>
        <C className="w-[8px]"><Plus size={7} color="#fff" strokeWidth={3} /></C>
        <span className="ml-[11px] mr-[12px]">100%</span>
      </div>
    </div>
  )
}

function RecycleBin() {
  return (
    <div className="absolute left-[8px] top-[6px] flex w-[52px] flex-col items-center">
      <svg width="28" height="30" viewBox="0 0 28 30">
        <defs>
          <linearGradient id="binBody" x1="0" x2="1" y1="0" y2="0">
            <stop offset="0" stopColor="#d9dde0" />
            <stop offset=".5" stopColor="#8d9aa3" />
            <stop offset="1" stopColor="#5f6a72" />
          </linearGradient>
        </defs>
        <path d="M2 2l22-1 3 2-2 4H3z" fill="#c2c7cb" />
        <path d="M2 4l4 25h15l5-24z" fill="url(#binBody)" />
        <path d="M9 14a5 5 0 018-1M18 17a5 5 0 01-8 1" fill="none" stroke="#2f8fdd" strokeWidth="2.2" />
      </svg>
      <span className="mt-[2px] text-[8px] leading-[11px] text-[#e8e8e8]">Recycle Bin</span>
    </div>
  )
}

function Taskbar() {
  return (
    <div className="flex h-[29px] shrink-0 items-center bg-[#070707] text-[#d6d6d6]">
      <C className="ml-[1px] h-full w-[31px]">
        <svg width="11" height="11" viewBox="0 0 11 11"><path d="M0 1.600L4.600.9v4.200H0zM5.200.8L11 0v5.100H5.200zM0 5.800h4.600V10L0 9.400zM5.200 5.800H11V11l-5.800-.8z" fill="#f2f2f2" /></svg>
      </C>
      <C className="h-full w-[32px]">
        <svg width="12" height="12" viewBox="0 0 12 12"><circle cx="7.500" cy="4.500" r="3.700" fill="none" stroke="#bdbdbd" /><path d="M5 7.300L1 11.200" stroke="#bdbdbd" /></svg>
      </C>
      <C className="h-full w-[32px]">
        <svg width="14" height="11" viewBox="0 0 14 11"><rect x="2.500" y=".5" width="9" height="10" rx="1" fill="none" stroke="#bdbdbd" /><path d="M.5 2v7M13.500 2v7" stroke="#bdbdbd" /></svg>
      </C>
      <C className="h-full w-[32px]">
        <svg width="14" height="14" viewBox="0 0 14 14"><path d="M2 7h10.500C12.500 3.500 10 1.500 7 1.500 3.500 1.500 1.500 4 1.500 7.500c0 3.500 3 5.500 6 5.500 1.500 0 3-.5 4-1.200" fill="none" stroke="#1f8fe6" strokeWidth="2.600" /></svg>
      </C>
      <C className="h-full w-[32px]">
        <svg width="15" height="13" viewBox="0 0 15 13"><path d="M0 1h6l1 2h8v10H0z" fill="#f5d77c" /><rect y="4" width="15" height="3" fill="#fbe9a8" /><rect x="4" y="8" width="7" height="4" fill="#4aa3c8" /></svg>
      </C>
      <C className="h-full w-[32px]">
        <svg width="15" height="15" viewBox="0 0 15 15">
          <path d="M4.500 4V2.500a3 3 0 016 0V4" fill="none" stroke="#eee" />
          <rect y="4" width="15" height="11" fill="#f4f4f4" />
          <rect x="4" y="6" width="3.300" height="3.300" fill="#e8532f" />
          <rect x="7.800" y="6" width="3.300" height="3.300" fill="#7fb92f" />
          <rect x="4" y="9.800" width="3.300" height="3.300" fill="#1f9ad8" />
          <rect x="7.800" y="9.800" width="3.300" height="3.300" fill="#f5b71c" />
        </svg>
      </C>
      <C className="h-full w-[33px]">
        <svg width="16" height="13" viewBox="0 0 16 13"><path d="M0 4l8-4 8 4v9H0z" fill="#f4f4f4" /><path d="M0 4l9 5 7-5" fill="none" stroke="#111" strokeWidth="1.200" /></svg>
      </C>
      <C className="h-full w-[31px] border-b-2 border-[#7fb4dc]"><OfficeIcon big letter="W" dark="#2b579a" light="#8aa9d6" /></C>
      <C className="h-full w-[32px] border-b-2 border-[#7fb4dc] bg-[#2b2b2b]"><OfficeIcon big letter="X" dark="#217346" light="#86c5a3" /></C>

      <div className="ml-auto flex h-full items-center">
        <C className="w-[23px]">
          <svg width="13" height="12" viewBox="0 0 13 12"><circle cx="4.500" cy="5" r="2.200" fill="none" stroke="#ccc" /><circle cx="9" cy="3" r="2" fill="none" stroke="#ccc" /><path d="M.5 11.500c0-2.500 2-4 4-4s3.500 1.500 3.500 4M9 5.500c2 0 3.500 1 3.500 3" fill="none" stroke="#ccc" /></svg>
        </C>
        <C className="w-[21px]"><ChevronUp size={13} color="#ccc" /></C>
        <C className="w-[15px]">
          <svg width="13" height="11" viewBox="0 0 13 11"><path d="M.5 3.500h2L6 1v9L2.500 7.500h-2z" fill="none" stroke="#ccc" /><path d="M8 3.500a2.500 2.500 0 010 4M10 2a5 5 0 010 7" fill="none" stroke="#ccc" /></svg>
        </C>
        <C className="w-[14px] text-[12px] text-[#ddd]">A</C>
        <C className="ml-[3px] w-[17px]"><span className="flex h-[9px] w-[9px] items-center justify-center rounded-[1px] bg-[#d8d8d8] text-[7px] font-bold leading-none text-[#111]">J</span></C>
        <div className="ml-[1px] flex w-[46px] flex-col items-center text-[8px] leading-[12px] text-[#d6d6d6]">
          <span>4:57 PM</span>
          <span>5/15/2019</span>
        </div>
        <C className="w-[24px]">
          <svg width="12" height="12" viewBox="0 0 12 12"><path d="M.5.5h11v8.500H7.500L5.500 11.500V9H.5z" fill="none" stroke="#ccc" /></svg>
        </C>
        <span className="ml-[7px] mr-[3px] h-[24px] w-px bg-[#2a2a2a]" />
      </div>
    </div>
  )
}

export default function App() {
  return (
    <div className="flex h-[594px] w-[950px] flex-col overflow-hidden bg-black font-['Roboto',sans-serif] blur-[0.3px]">
      <div className="relative flex-1">
        <RecycleBin />
        <WordWindow />
        <ExcelWindow />
      </div>
      <Taskbar />
    </div>
  )
}
